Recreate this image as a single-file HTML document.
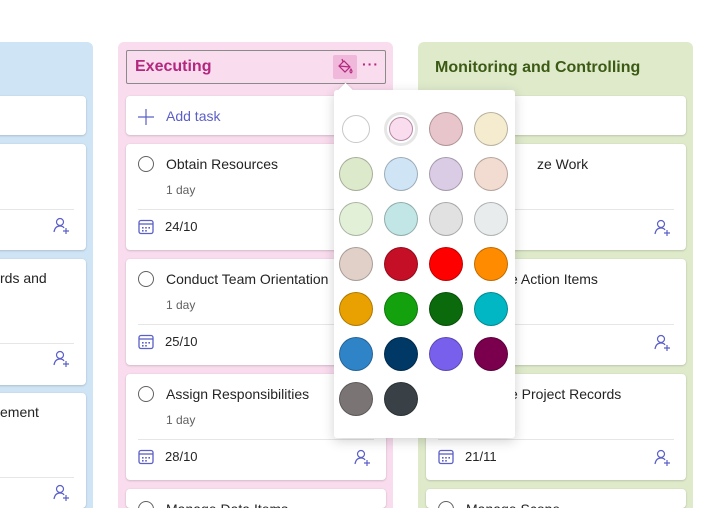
<!DOCTYPE html>
<html style="width:703px;height:508px;overflow:hidden"><head><meta charset="utf-8"><style>
*{box-sizing:border-box;margin:0;padding:0}
body{width:703px;height:508px;overflow:hidden;background:#fff;font-family:"Segoe UI","Liberation Sans",sans-serif;color:#242424}
#root{position:relative;width:703px;height:508px;overflow:hidden}
.abs{position:absolute}
.col{position:absolute;top:42px;height:466px;border-radius:6px 6px 0 0}
.card{position:absolute;background:#fff;border-radius:4px;box-shadow:0 1px 2px rgba(0,0,0,.14),0 0 2px rgba(0,0,0,.06)}
.t{position:absolute;font-size:14px;white-space:nowrap;color:#242424}
.s{position:absolute;font-size:12px;color:#616161}
.circ{position:absolute;width:16px;height:16px;border:1.5px solid #616161;border-radius:50%}
.div{position:absolute;height:1px;background:#e6e6e6}
.sw{position:absolute;width:34px;height:34px;border-radius:50%;border:1.5px solid rgba(0,0,0,.25)}
</style></head><body><div id="root">
<div class="col" style="left:-10px;width:103px;background:#cfe4f5"></div>
<div class="col" style="left:118px;width:275px;background:#f9dcee"></div>
<div class="col" style="left:418px;width:275px;background:#dfeacb"></div>

<div class="card" style="left:-6px;top:96px;width:92px;height:39px"></div>
<div class="card" style="left:-6px;top:144px;width:92px;height:106px"></div>
<div class="div" style="left:0;top:209px;width:74px"></div>
<div class="card" style="left:-6px;top:259px;width:92px;height:126px"></div>
<div class="t" style="left:0;top:270px">rds and</div>
<div class="div" style="left:0;top:343px;width:74px"></div>
<div class="card" style="left:-6px;top:393px;width:92px;height:115px"></div>
<div class="t" style="left:0;top:404px">ement</div>
<div class="div" style="left:0;top:477px;width:74px"></div>

<div class="abs" style="left:126px;top:50px;width:260px;height:34px;border:1px solid #8a8a8a;border-radius:2px"></div>
<div class="abs" style="left:135px;top:58px;font-size:16px;font-weight:600;color:#b4277f">Executing</div>
<div class="abs" style="left:333px;top:55px;width:24px;height:24px;background:#f0b8da;border-radius:2px"></div>
<svg class="abs" style="left:336px;top:57px" width="18" height="20" viewBox="0 0 18 20"><path d="M6 2 L7 5 M3 9 L8 4 L14 10 L9 15 Z M3 9 L14 10" fill="none" stroke="#b4277f" stroke-width="1.2"/><path d="M15 12 q-2 3 0 4 q2 -1 0 -4z" fill="none" stroke="#b4277f" stroke-width="1.1"/></svg>
<div class="abs" style="left:362px;top:56px;font-size:14px;font-weight:700;color:#b4277f;letter-spacing:1px">···</div>

<div class="card" style="left:126px;top:96px;width:260px;height:39px"></div>
<svg class="abs" style="left:138px;top:109px" width="16" height="16"><path d="M8 0v16M0 8h16" stroke="#5b5fc7" stroke-width="1.2"/></svg>
<div class="abs" style="left:166px;top:108px;font-size:14px;color:#5b5fc7">Add task</div>

<div id="mid"></div>

<div class="abs" style="left:435px;top:59px;font-size:16px;font-weight:600;color:#3b5a14">Monitoring and Controlling</div>
<div class="card" style="left:426px;top:96px;width:260px;height:39px"></div>
<div class="abs" style="left:503px;top:108px;font-size:14px;color:#5b5fc7">k</div>

<script>
function person(x,y){return '<svg class="abs" style="left:'+x+'px;top:'+y+'px" width="18" height="18" viewBox="0 0 18 18"><circle cx="7" cy="5" r="3.5" fill="none" stroke="#5b5fc7" stroke-width="1.2"/><path d="M1 15 q1-6 6-6 q3 0 4 2" fill="none" stroke="#5b5fc7" stroke-width="1.2"/><path d="M13 11v6M10 14h6" stroke="#5b5fc7" stroke-width="1.2"/></svg>';}
function cal(x,y){return '<svg class="abs" style="left:'+x+'px;top:'+y+'px" width="16" height="16" viewBox="0 0 16 16"><rect x="1" y="1.5" width="14" height="13" rx="2" fill="none" stroke="#5b5fc7" stroke-width="1.3"/><path d="M1 5h14" stroke="#5b5fc7" stroke-width="1.3"/><g fill="#5b5fc7"><rect x="4" y="8" width="1.6" height="1.6"/><rect x="7.2" y="8" width="1.6" height="1.6"/><rect x="10.4" y="8" width="1.6" height="1.6"/><rect x="4" y="11" width="1.6" height="1.6"/><rect x="7.2" y="11" width="1.6" height="1.6"/></g></svg>';}
var h='';
function task(x,y,title,date,trunc,last){
 h+='<div class="card" style="left:'+x+'px;top:'+y+'px;width:260px;height:'+(last?19:106)+'px"></div>';
 if(!trunc){h+='<div class="circ" style="left:'+(x+12)+'px;top:'+(y+12)+'px"></div>';
 h+='<div class="t" style="left:'+(x+40)+'px;top:'+(y+12)+'px">'+title+'</div>';
 if(!last)h+='<div class="s" style="left:'+(x+40)+'px;top:'+(y+39)+'px">1 day</div>';}
 else h+='<div class="t" style="left:'+(x+trunc)+'px;top:'+(y+12)+'px">'+title+'</div>';
 if(last)return;
 h+='<div class="div" style="left:'+(x+12)+'px;top:'+(y+65)+'px;width:236px"></div>';
 if(date){h+=cal(x+12,y+75);h+='<div class="t" style="left:'+(x+39)+'px;top:'+(y+75)+'px;font-size:13px">'+date+'</div>';}
 h+=person(x+228,y+75);
}
task(126,144,'Obtain Resources','24/10');
task(126,259,'Conduct Team Orientation','25/10');
task(126,374,'Assign Responsibilities','28/10');
task(126,489,'Manage Data Items','',0,1);
task(426,144,'ze Work','',111);
task(426,259,'e Action Items','',84);
task(426,374,'e Project Records','21/11',84);
task(426,489,'Manage Scope','',0,1);
h+=person(53,217)+person(53,350)+person(53,484);
document.getElementById('mid').outerHTML=h;
</script>

<div class="abs" style="left:334px;top:90px;width:181px;height:348px;background:#fff;border-radius:3px;box-shadow:0 3px 12px rgba(0,0,0,.18)"></div>
<div class="abs" style="left:340px;top:85px;width:11px;height:11px;background:#fff;transform:rotate(45deg);box-shadow:-1px -1px 2px rgba(0,0,0,.06)"></div>
<div id="sw"></div>
<script>
var c=['#fff','#fadcef','#e8c5ca','#f5ecd0','#dde9cb','#cfe4f5','#dbcce5','#f2dbd0','#e3f0d8','#c1e6e5','#e1e1e1','#e9ecec','#e0d0c8','#c40f26','#ff0000','#ff8c00','#e8a100','#13a10e','#0b6a0b','#00b7c3','#2f84c8','#003966','#7860ec','#7a004e','#7a7574','#394146'];
var s='';
c.forEach(function(col,i){var cx=356+(i%4)*45,cy=129+Math.floor(i/4)*45;
 if(i==0)s+='<div class="sw" style="left:'+(cx-14)+'px;top:'+(cy-14)+'px;width:28px;height:28px;background:#fff;border-color:#c8c8c8"></div>';
 else if(i==1)s+='<div class="sw" style="left:'+(cx-17)+'px;top:'+(cy-17)+'px;background:#fff;border:3px solid #e6e6e6"></div><div class="sw" style="left:'+(cx-12)+'px;top:'+(cy-12)+'px;width:24px;height:24px;background:'+col+';border-color:#b48aa3"></div>';
 else s+='<div class="sw" style="left:'+(cx-17)+'px;top:'+(cy-17)+'px;background:'+col+'"></div>';});
document.getElementById('sw').outerHTML=s;
</script>
</div></body></html>
